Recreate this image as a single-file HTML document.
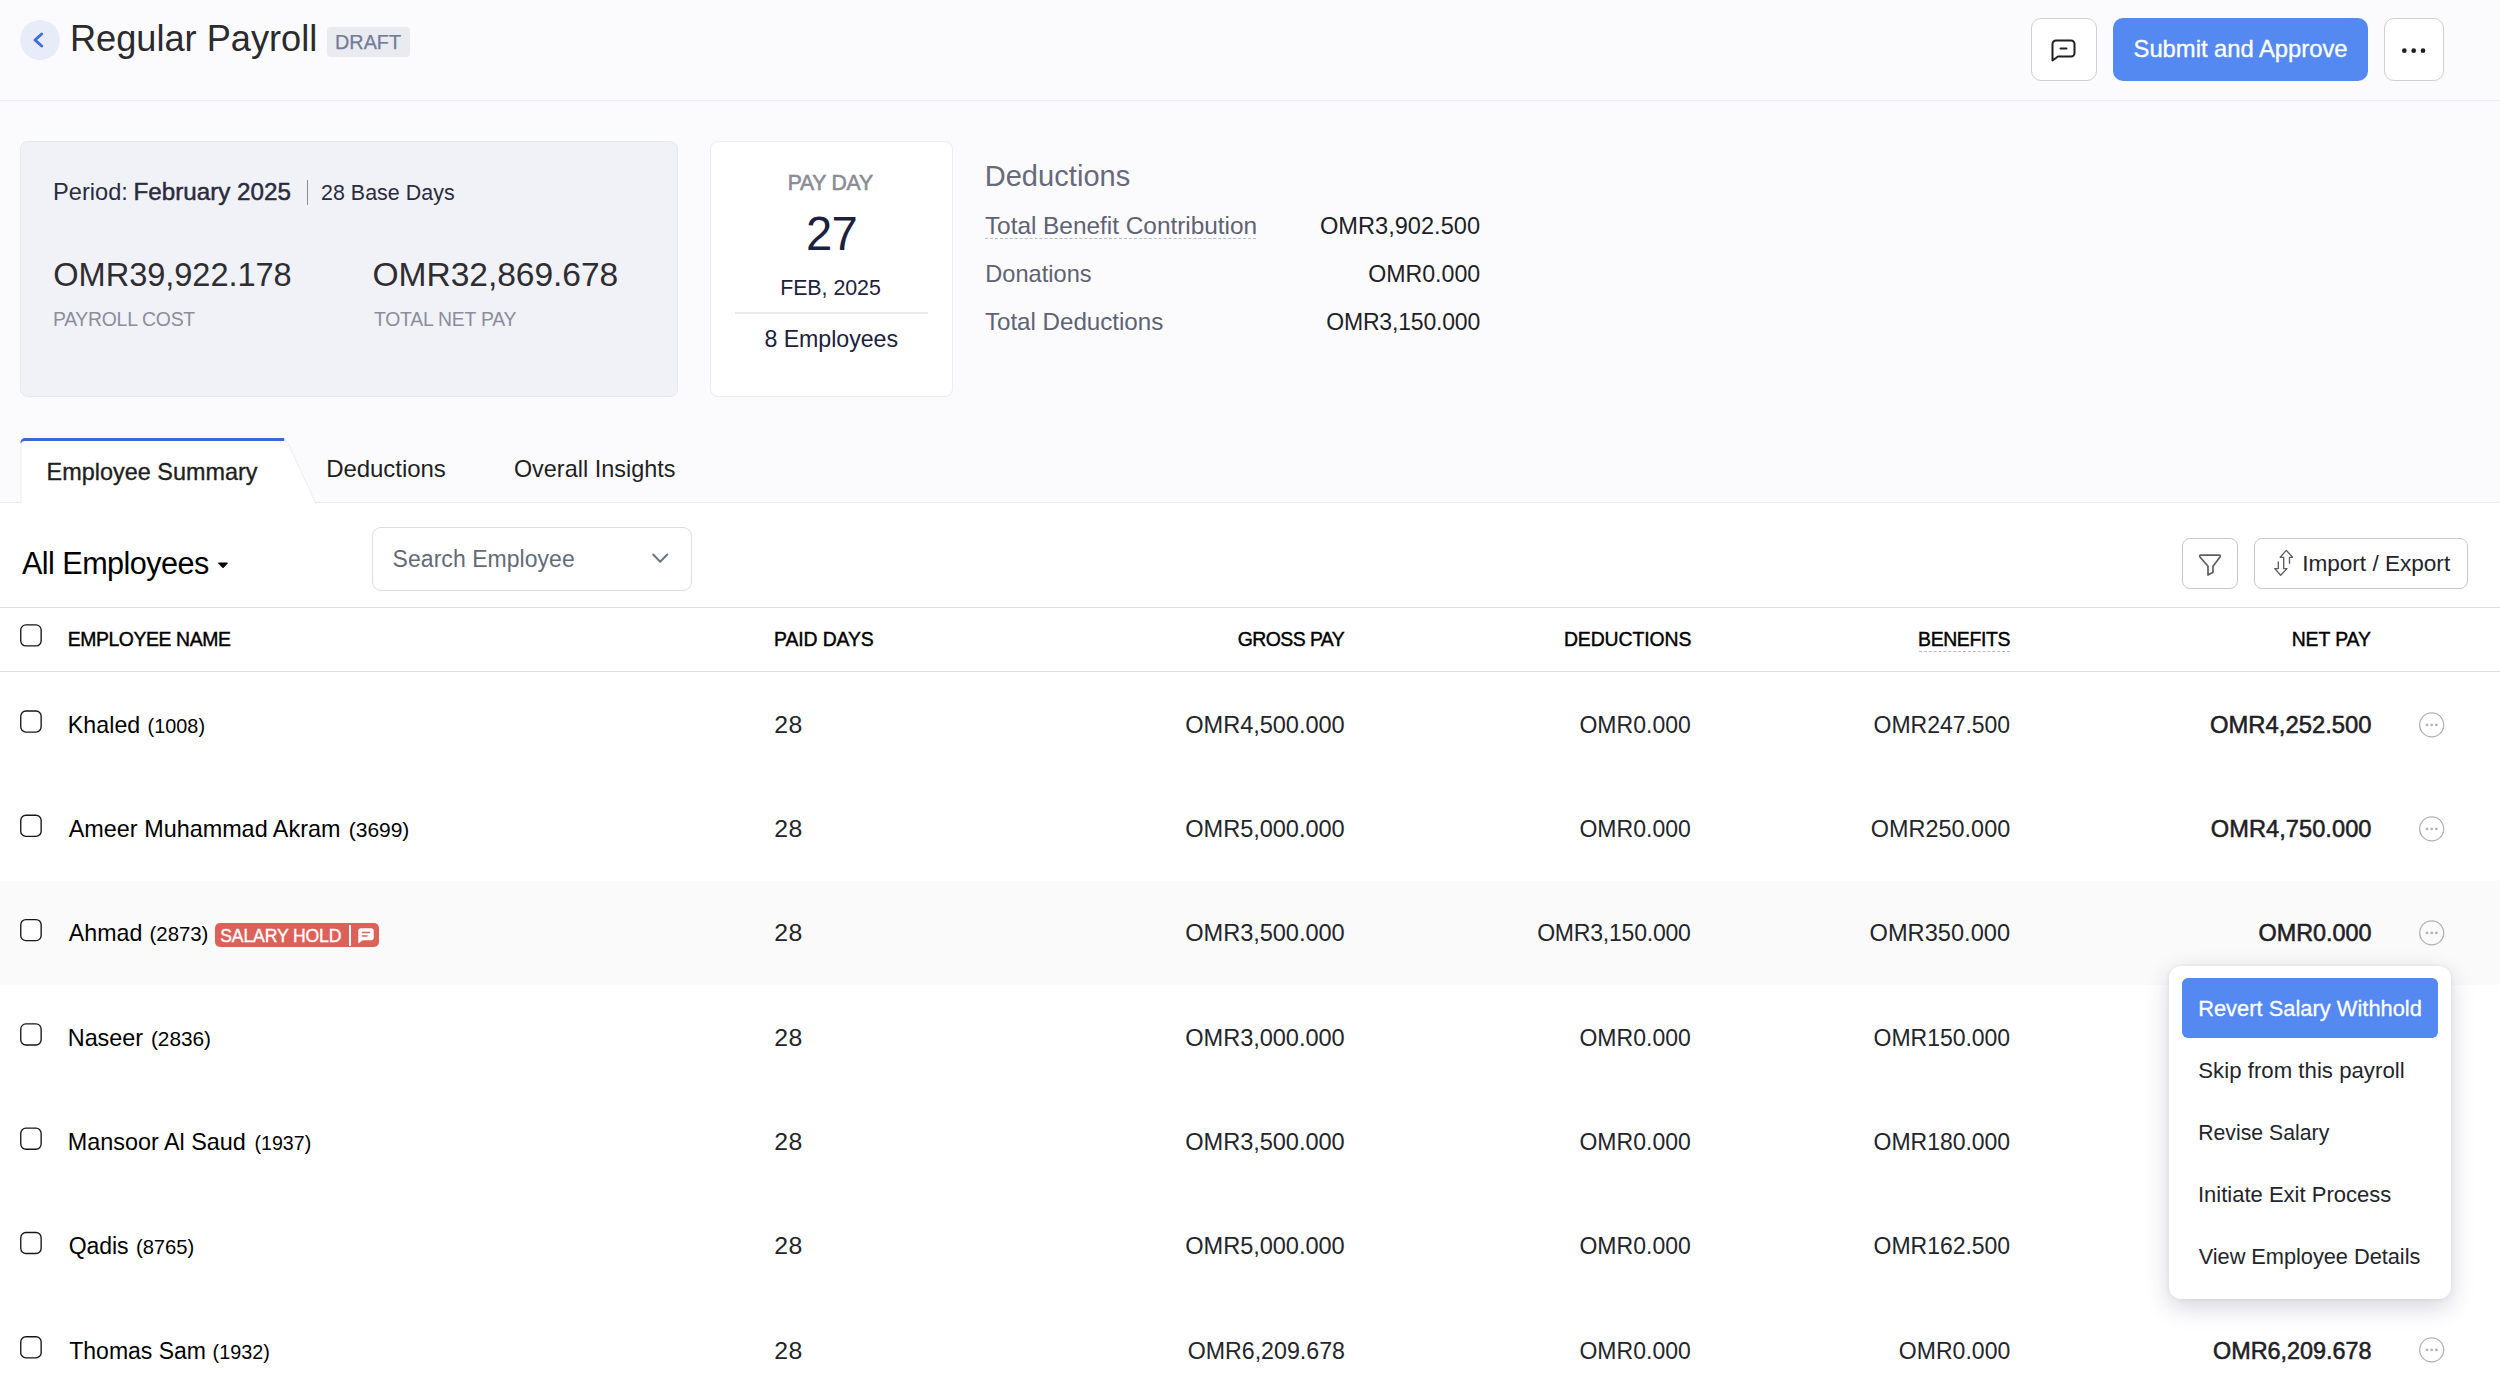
<!DOCTYPE html>
<html lang="en"><head><meta charset="utf-8"><title>Regular Payroll</title>
<style>
html,body{margin:0;padding:0;}
body{width:2500px;height:1396px;position:relative;overflow:hidden;background:#fbfbfe;font-family:"Liberation Sans", sans-serif;}
.t{position:absolute;white-space:nowrap;margin:0;padding:0;}
.a{position:absolute;box-sizing:border-box;}
svg{position:absolute;overflow:visible;}
</style></head><body>
<!-- header -->
<div class="a" style="left:0;top:100px;width:2500px;height:1px;background:#ebebef"></div>
<div class="a" style="left:20px;top:20px;width:40px;height:40px;border-radius:50%;background:#e8ecf9"></div>
<svg style="left:20px;top:20px" width="40" height="40" viewBox="0 0 40 40"><path d="M21.7 14 L15 20 L21.7 26" fill="none" stroke="#3d6fd9" stroke-width="3" stroke-linecap="round" stroke-linejoin="round"/></svg>
<div class="a" style="left:327px;top:27px;width:83px;height:30px;border-radius:4px;background:#e9ebf1"></div>
<div class="a" style="left:2031px;top:18px;width:66px;height:63px;border:1px solid #cfcfd4;border-radius:10px;background:#fff"></div>
<svg style="left:2051px;top:39px" width="26" height="24" viewBox="0 0 26 24"><path d="M5 1.5 H20 A3.5 3.5 0 0 1 23.5 5 V14 A3.5 3.5 0 0 1 20 17.5 H7 L1.5 21.5 V5 A3.5 3.5 0 0 1 5 1.5 Z" fill="none" stroke="#1f2024" stroke-width="2" stroke-linejoin="round"/><path d="M9.5 9.5 H15.5" stroke="#1f2024" stroke-width="2" stroke-linecap="round"/></svg>
<div class="a" style="left:2113px;top:18px;width:255px;height:63px;border-radius:10px;background:#5389f0"></div>
<div class="a" style="left:2384px;top:18px;width:60px;height:63px;border:1px solid #cfcfd4;border-radius:10px;background:#fff"></div>
<svg style="left:2384px;top:18px" width="60" height="63" viewBox="0 0 60 63"><circle cx="20.3" cy="32.7" r="2.35" fill="#1f2024"/><circle cx="29.7" cy="32.7" r="2.35" fill="#1f2024"/><circle cx="39" cy="32.7" r="2.35" fill="#1f2024"/></svg>
<!-- summary card -->
<div class="a" style="left:20px;top:141px;width:658px;height:256px;border-radius:8px;background:#f1f2f8;border:1px solid #e7e8ef"></div>
<div class="a" style="left:307px;top:180px;width:1px;height:25px;background:#8a8d9c"></div>
<!-- pay day card -->
<div class="a" style="left:710px;top:141px;width:243px;height:256px;border-radius:8px;background:#fff;border:1px solid #ececf2"></div>
<div class="a" style="left:735px;top:312px;width:193px;height:2px;background:#ebebef"></div>
<!-- deductions underline -->
<div class="a" style="left:985px;top:238px;width:271px;height:0;border-top:1px dashed #b9bac4"></div>
<!-- tabs -->
<div class="a" style="left:0;top:503px;width:2500px;height:893px;background:#fff"></div>
<div class="a" style="left:0;top:502px;width:2500px;height:1px;background:#e9e9ee"></div>
<svg style="left:0;top:430px" width="340" height="80" viewBox="0 0 340 80"><path d="M21 73.5 V12.5 A4 4 0 0 1 25 8.5 H281 Q287 8.5 289.5 14 L316.5 74.5 H21 Z" fill="#fff" stroke="none"/><path d="M21 72.5 V12.5 A4 4 0 0 1 25 9.5 H281 Q286.5 9.5 289 15 L316.3 74.5" fill="none" stroke="#ececf1" stroke-width="1"/><path d="M20.5 13 A4.5 4.5 0 0 1 25 8 H284.2 V11 H24.5 Q22 11 21 13 Z" fill="#3769d8"/></svg>
<!-- toolbar -->
<svg style="left:217px;top:562px" width="12" height="7" viewBox="0 0 12 7"><path d="M1.5 1 H10.5 L6 5.8 Z" fill="#000" stroke="#000" stroke-width="1" stroke-linejoin="round"/></svg>
<div class="a" style="left:372px;top:527px;width:320px;height:64px;border:1px solid #dddee3;border-radius:9px;background:#fff"></div>
<svg style="left:652px;top:553px" width="17" height="11" viewBox="0 0 17 11"><path d="M1.2 1.5 L8.2 8.8 L15.2 1.5" fill="none" stroke="#6b7688" stroke-width="2" stroke-linecap="round" stroke-linejoin="round"/></svg>
<div class="a" style="left:2182px;top:538px;width:56px;height:51px;border:1px solid #c8c8cb;border-radius:8px;background:#fff"></div>
<svg style="left:2199px;top:554px" width="23" height="23" viewBox="0 0 23 23"><path d="M1.9 1.2 H20 Q22 1.4 21 3 L14 12.3 V18.2 L9 21 V12.3 L1 3 Q0 1.4 1.9 1.2 Z" fill="none" stroke="#5e5e62" stroke-width="1.7" stroke-linejoin="round"/></svg>
<div class="a" style="left:2254px;top:538px;width:214px;height:51px;border:1px solid #c8c8cb;border-radius:8px;background:#fff"></div>
<svg style="left:2274px;top:550px" width="20" height="26" viewBox="0 0 20 26"><path d="M15.5 13.3 L15.5 7.3 L18.6 7.3 L12.3 0.4 L6.2 7.3 L9.7 7.3 L9.7 18.6 L13 18.6 L6.6 25.3 L0.8 18.6 L4.3 18.6 L4.3 12" fill="none" stroke="#5e5e62" stroke-width="1.35" stroke-linejoin="round" stroke-linecap="round"/></svg>
<!-- table -->
<div class="a" style="left:0;top:607px;width:2500px;height:1px;background:#dddde0"></div>
<div class="a" style="left:0;top:671px;width:2500px;height:1px;background:#dddde0"></div>
<div class="a" style="left:0;top:880.5px;width:2500px;height:104px;background:#fafafa"></div>
<div class="a" style="left:985px;top:238px;width:0;height:0"></div>
<div class="a" style="left:1919px;top:651px;width:91px;height:0;border-top:1px dashed #b9bac4"></div>
<svg style="left:2418px;top:710.5px" width="28" height="28" viewBox="0 0 28 28"><circle cx="13.7" cy="13.9" r="12" fill="none" stroke="#b2b2b5" stroke-width="1.3"/><circle cx="9" cy="13.9" r="1.45" fill="#b4b4b7"/><circle cx="13.7" cy="13.9" r="1.45" fill="#b4b4b7"/><circle cx="18.4" cy="13.9" r="1.45" fill="#b4b4b7"/></svg>
<svg style="left:2418px;top:814.8px" width="28" height="28" viewBox="0 0 28 28"><circle cx="13.7" cy="13.9" r="12" fill="none" stroke="#b2b2b5" stroke-width="1.3"/><circle cx="9" cy="13.9" r="1.45" fill="#b4b4b7"/><circle cx="13.7" cy="13.9" r="1.45" fill="#b4b4b7"/><circle cx="18.4" cy="13.9" r="1.45" fill="#b4b4b7"/></svg>
<svg style="left:2418px;top:919.1px" width="28" height="28" viewBox="0 0 28 28"><circle cx="13.7" cy="13.9" r="12" fill="none" stroke="#b2b2b5" stroke-width="1.3"/><circle cx="9" cy="13.9" r="1.45" fill="#b4b4b7"/><circle cx="13.7" cy="13.9" r="1.45" fill="#b4b4b7"/><circle cx="18.4" cy="13.9" r="1.45" fill="#b4b4b7"/></svg>
<svg style="left:2418px;top:1336.3px" width="28" height="28" viewBox="0 0 28 28"><circle cx="13.7" cy="13.9" r="12" fill="none" stroke="#b2b2b5" stroke-width="1.3"/><circle cx="9" cy="13.9" r="1.45" fill="#b4b4b7"/><circle cx="13.7" cy="13.9" r="1.45" fill="#b4b4b7"/><circle cx="18.4" cy="13.9" r="1.45" fill="#b4b4b7"/></svg>
<div class="a" style="left:215px;top:923px;width:164px;height:24px;border-radius:5px;background:#dc6259"></div>
<div class="a" style="left:349px;top:925px;width:2px;height:21px;background:#fff"></div>
<svg style="left:358px;top:928px" width="16" height="16" viewBox="0 0 16 16"><path d="M3 0.3 H13 A2.7 2.7 0 0 1 15.7 3 V9.6 A2.7 2.7 0 0 1 13 12.3 H4.6 L0.3 15.6 V3 A2.7 2.7 0 0 1 3 0.3 Z" fill="#fff"/><path d="M4.3 4.6 H11.6 M4.3 8 H9" stroke="#dc6259" stroke-width="1.5" stroke-linecap="round"/></svg>
<div class="a" style="left:2169.3px;top:966px;width:282px;height:333px;border-radius:12px;background:#fff;box-shadow:0 8px 24px rgba(40,40,80,0.20),0 0 4px rgba(40,40,80,0.08)"></div>
<div class="a" style="left:2182.2px;top:978.4px;width:256px;height:59.2px;border-radius:6px;background:#5389f0"></div>
<svg style="left:0;top:0" width="60" height="1396" viewBox="0 0 60 1396"><rect x="20.75" y="624.85" width="20.4" height="21.1" rx="5.2" fill="#fff" stroke="#161616" stroke-width="1.35"/><rect x="20.75" y="710.95" width="20.4" height="21.1" rx="5.2" fill="#fff" stroke="#161616" stroke-width="1.35"/><rect x="20.75" y="815.25" width="20.4" height="21.1" rx="5.2" fill="#fff" stroke="#161616" stroke-width="1.35"/><rect x="20.75" y="919.55" width="20.4" height="21.1" rx="5.2" fill="#fff" stroke="#161616" stroke-width="1.35"/><rect x="20.75" y="1023.85" width="20.4" height="21.1" rx="5.2" fill="#fff" stroke="#161616" stroke-width="1.35"/><rect x="20.75" y="1128.15" width="20.4" height="21.1" rx="5.2" fill="#fff" stroke="#161616" stroke-width="1.35"/><rect x="20.75" y="1232.45" width="20.4" height="21.1" rx="5.2" fill="#fff" stroke="#161616" stroke-width="1.35"/><rect x="20.75" y="1336.75" width="20.4" height="21.1" rx="5.2" fill="#fff" stroke="#161616" stroke-width="1.35"/></svg>

<div class="t" style="left:70.00px;top:16px;font-size:36.2px;line-height:45px;color:#2b2b2d;letter-spacing:-0.014px;">Regular Payroll</div>
<div class="t" style="left:335.05px;top:29px;font-size:19.8px;line-height:26px;color:#707c98;letter-spacing:0.012px;-webkit-text-stroke:0.25px #707c98;">DRAFT</div>
<div class="t" style="left:2133.55px;top:33px;font-size:23.8px;line-height:31px;color:#ffffff;letter-spacing:-0.021px;-webkit-text-stroke:0.35px #ffffff;">Submit and Approve</div>
<div class="t" style="left:53.00px;top:177px;font-size:23.6px;line-height:30px;color:#2a2c3e;letter-spacing:0.017px;">Period:</div>
<div class="t" style="left:133.40px;top:176px;font-size:24.2px;line-height:31px;color:#2a2c3e;letter-spacing:0.021px;-webkit-text-stroke:0.5px #2a2c3e;">February 2025</div>
<div class="t" style="left:321.00px;top:179px;font-size:21.4px;line-height:28px;color:#2a2c3e;letter-spacing:0.045px;">28 Base Days</div>
<div class="t" style="left:53.30px;top:254px;font-size:32.6px;line-height:41px;color:#2e2e32;letter-spacing:-0.054px;">OMR39,922.178</div>
<div class="t" style="left:372.50px;top:254px;font-size:33.6px;line-height:41px;color:#2e2e32;letter-spacing:-0.058px;">OMR32,869.678</div>
<div class="t" style="left:52.90px;top:306px;font-size:19.4px;line-height:26px;color:#8a8d9c;letter-spacing:-0.255px;">PAYROLL COST</div>
<div class="t" style="left:373.90px;top:306px;font-size:19.4px;line-height:26px;color:#8a8d9c;letter-spacing:-0.204px;">TOTAL NET PAY</div>
<div class="t" style="left:787.65px;top:169px;font-size:21.2px;line-height:27px;color:#8a8d96;letter-spacing:-0.217px;-webkit-text-stroke:0.6px #8a8d96;">PAY DAY</div>
<div class="t" style="left:805.90px;top:205px;font-size:47.2px;line-height:57px;color:#1c2140;letter-spacing:-0.600px;">27</div>
<div class="t" style="left:780.15px;top:274px;font-size:21.4px;line-height:28px;color:#1c2140;letter-spacing:-0.050px;">FEB, 2025</div>
<div class="t" style="left:764.40px;top:324px;font-size:23.2px;line-height:30px;color:#1c2140;letter-spacing:-0.045px;">8 Employees</div>
<div class="t" style="left:984.70px;top:158px;font-size:29.0px;line-height:36px;color:#666a79;letter-spacing:0.056px;">Deductions</div>
<div class="t" style="left:984.90px;top:210px;font-size:24.4px;line-height:31px;color:#5e6272;letter-spacing:-0.012px;">Total Benefit Contribution</div>
<div class="t" style="left:985.20px;top:259px;font-size:23.6px;line-height:30px;color:#5e6272;letter-spacing:0.019px;">Donations</div>
<div class="t" style="left:984.90px;top:306px;font-size:24.2px;line-height:31px;color:#5e6272;letter-spacing:-0.027px;">Total Deductions</div>
<div class="t" style="left:1319.95px;top:211px;font-size:23.6px;line-height:30px;color:#1e1f26;letter-spacing:0.009px;">OMR3,902.500</div>
<div class="t" style="left:1368.20px;top:259px;font-size:23.2px;line-height:30px;color:#1e1f26;letter-spacing:-0.021px;">OMR0.000</div>
<div class="t" style="left:1326.20px;top:307px;font-size:23.0px;line-height:30px;color:#1e1f26;letter-spacing:-0.173px;">OMR3,150.000</div>
<div class="t" style="left:46.60px;top:457px;font-size:23.4px;line-height:30px;color:#1f1f1f;letter-spacing:0.020px;-webkit-text-stroke:0.35px #1f1f1f;">Employee Summary</div>
<div class="t" style="left:326.20px;top:453px;font-size:24.0px;line-height:31px;color:#1f1f1f;letter-spacing:-0.050px;">Deductions</div>
<div class="t" style="left:513.90px;top:454px;font-size:23.4px;line-height:30px;color:#1f1f1f;letter-spacing:0.027px;">Overall Insights</div>
<div class="t" style="left:21.95px;top:544px;font-size:30.6px;line-height:38px;color:#000;letter-spacing:-0.542px;">All Employees</div>
<div class="t" style="left:392.60px;top:544px;font-size:23.0px;line-height:30px;color:#646b77;letter-spacing:0.043px;">Search Employee</div>
<div class="t" style="left:2302.20px;top:549px;font-size:22.6px;line-height:29px;color:#23252b;letter-spacing:-0.014px;">Import / Export</div>
<div class="t" style="left:67.70px;top:626px;font-size:19.4px;line-height:26px;color:#000;letter-spacing:-0.413px;-webkit-text-stroke:0.42px #000;">EMPLOYEE NAME</div>
<div class="t" style="left:774.00px;top:626px;font-size:19.4px;line-height:26px;color:#000;letter-spacing:-0.106px;-webkit-text-stroke:0.42px #000;">PAID DAYS</div>
<div class="t" style="left:1237.80px;top:626px;font-size:19.4px;line-height:26px;color:#000;letter-spacing:-0.556px;-webkit-text-stroke:0.42px #000;">GROSS PAY</div>
<div class="t" style="left:1563.90px;top:626px;font-size:19.4px;line-height:26px;color:#000;letter-spacing:-0.083px;-webkit-text-stroke:0.42px #000;">DEDUCTIONS</div>
<div class="t" style="left:1918.10px;top:626px;font-size:19.4px;line-height:26px;color:#000;letter-spacing:-0.371px;-webkit-text-stroke:0.42px #000;">BENEFITS</div>
<div class="t" style="left:2291.70px;top:626px;font-size:19.4px;line-height:26px;color:#000;letter-spacing:-0.083px;-webkit-text-stroke:0.42px #000;">NET PAY</div>
<div class="t" style="left:67.80px;top:710px;font-size:23.2px;line-height:30px;color:#000;letter-spacing:0.050px;">Khaled</div>
<div class="t" style="left:147.55px;top:713px;font-size:19.8px;line-height:26px;color:#000;letter-spacing:0.050px;">(1008)</div>
<div class="t" style="left:774.25px;top:709px;font-size:24.8px;line-height:31px;color:#23252b;letter-spacing:0.350px;">28</div>
<div class="t" style="left:1185.25px;top:710px;font-size:23.6px;line-height:30px;color:#23252b;letter-spacing:-0.055px;">OMR4,500.000</div>
<div class="t" style="left:1579.40px;top:710px;font-size:23.0px;line-height:30px;color:#23252b;letter-spacing:0.036px;">OMR0.000</div>
<div class="t" style="left:1873.60px;top:710px;font-size:23.0px;line-height:30px;color:#23252b;letter-spacing:-0.033px;">OMR247.500</div>
<div class="t" style="left:2209.95px;top:709px;font-size:23.8px;line-height:31px;color:#1f2026;letter-spacing:0.023px;-webkit-text-stroke:0.55px #1f2026;">OMR4,252.500</div>
<div class="t" style="left:68.75px;top:814px;font-size:23.4px;line-height:30px;color:#000;">Ameer Muhammad Akram</div>
<div class="t" style="left:348.75px;top:816px;font-size:21.0px;line-height:27px;color:#000;letter-spacing:-0.020px;">(3699)</div>
<div class="t" style="left:774.25px;top:813px;font-size:24.8px;line-height:31px;color:#23252b;letter-spacing:0.350px;">28</div>
<div class="t" style="left:1185.25px;top:814px;font-size:23.6px;line-height:30px;color:#23252b;letter-spacing:-0.055px;">OMR5,000.000</div>
<div class="t" style="left:1579.40px;top:814px;font-size:23.0px;line-height:30px;color:#23252b;letter-spacing:0.036px;">OMR0.000</div>
<div class="t" style="left:1870.80px;top:814px;font-size:23.4px;line-height:30px;color:#23252b;letter-spacing:0.028px;">OMR250.000</div>
<div class="t" style="left:2210.85px;top:814px;font-size:23.6px;line-height:30px;color:#1f2026;letter-spacing:0.055px;-webkit-text-stroke:0.55px #1f2026;">OMR4,750.000</div>
<div class="t" style="left:68.75px;top:918px;font-size:23.2px;line-height:30px;color:#000;letter-spacing:0.062px;">Ahmad</div>
<div class="t" style="left:149.55px;top:921px;font-size:20.4px;line-height:26px;color:#000;letter-spacing:-0.020px;">(2873)</div>
<div class="t" style="left:774.25px;top:917px;font-size:24.8px;line-height:31px;color:#23252b;letter-spacing:0.350px;">28</div>
<div class="t" style="left:1185.25px;top:918px;font-size:23.6px;line-height:30px;color:#23252b;letter-spacing:-0.055px;">OMR3,500.000</div>
<div class="t" style="left:1537.20px;top:918px;font-size:23.0px;line-height:30px;color:#23252b;letter-spacing:-0.209px;">OMR3,150.000</div>
<div class="t" style="left:1869.55px;top:918px;font-size:23.6px;line-height:30px;color:#23252b;letter-spacing:0.028px;">OMR350.000</div>
<div class="t" style="left:2258.50px;top:918px;font-size:23.4px;line-height:30px;color:#1f2026;letter-spacing:-0.007px;-webkit-text-stroke:0.55px #1f2026;">OMR0.000</div>
<div class="t" style="left:67.80px;top:1023px;font-size:23.4px;line-height:30px;color:#000;letter-spacing:-0.040px;">Naseer</div>
<div class="t" style="left:150.95px;top:1025px;font-size:20.8px;line-height:27px;color:#000;letter-spacing:-0.020px;">(2836)</div>
<div class="t" style="left:774.25px;top:1022px;font-size:24.8px;line-height:31px;color:#23252b;letter-spacing:0.350px;">28</div>
<div class="t" style="left:1185.25px;top:1023px;font-size:23.6px;line-height:30px;color:#23252b;letter-spacing:-0.055px;">OMR3,000.000</div>
<div class="t" style="left:1579.40px;top:1023px;font-size:23.0px;line-height:30px;color:#23252b;letter-spacing:0.036px;">OMR0.000</div>
<div class="t" style="left:1873.60px;top:1023px;font-size:23.0px;line-height:30px;color:#23252b;letter-spacing:-0.033px;">OMR150.000</div>
<div class="t" style="left:67.80px;top:1127px;font-size:23.4px;line-height:30px;color:#000;letter-spacing:-0.007px;">Mansoor Al Saud</div>
<div class="t" style="left:254.45px;top:1130px;font-size:19.6px;line-height:26px;color:#000;letter-spacing:0.030px;">(1937)</div>
<div class="t" style="left:774.25px;top:1126px;font-size:24.8px;line-height:31px;color:#23252b;letter-spacing:0.350px;">28</div>
<div class="t" style="left:1185.25px;top:1127px;font-size:23.6px;line-height:30px;color:#23252b;letter-spacing:-0.055px;">OMR3,500.000</div>
<div class="t" style="left:1579.40px;top:1127px;font-size:23.0px;line-height:30px;color:#23252b;letter-spacing:0.036px;">OMR0.000</div>
<div class="t" style="left:1873.60px;top:1127px;font-size:23.0px;line-height:30px;color:#23252b;letter-spacing:-0.033px;">OMR180.000</div>
<div class="t" style="left:68.80px;top:1231px;font-size:23.0px;line-height:30px;color:#000;letter-spacing:-0.112px;">Qadis</div>
<div class="t" style="left:135.95px;top:1234px;font-size:20.2px;line-height:26px;color:#000;letter-spacing:-0.020px;">(8765)</div>
<div class="t" style="left:774.25px;top:1230px;font-size:24.8px;line-height:31px;color:#23252b;letter-spacing:0.350px;">28</div>
<div class="t" style="left:1185.25px;top:1231px;font-size:23.6px;line-height:30px;color:#23252b;letter-spacing:-0.055px;">OMR5,000.000</div>
<div class="t" style="left:1579.40px;top:1231px;font-size:23.0px;line-height:30px;color:#23252b;letter-spacing:0.036px;">OMR0.000</div>
<div class="t" style="left:1873.60px;top:1231px;font-size:23.0px;line-height:30px;color:#23252b;letter-spacing:-0.033px;">OMR162.500</div>
<div class="t" style="left:69.30px;top:1336px;font-size:23.0px;line-height:30px;color:#000;letter-spacing:-0.017px;">Thomas Sam</div>
<div class="t" style="left:212.55px;top:1339px;font-size:19.8px;line-height:26px;color:#000;letter-spacing:0.010px;">(1932)</div>
<div class="t" style="left:774.25px;top:1335px;font-size:24.8px;line-height:31px;color:#23252b;letter-spacing:0.350px;">28</div>
<div class="t" style="left:1187.70px;top:1336px;font-size:23.2px;line-height:30px;color:#23252b;">OMR6,209.678</div>
<div class="t" style="left:1579.40px;top:1336px;font-size:23.0px;line-height:30px;color:#23252b;letter-spacing:0.036px;">OMR0.000</div>
<div class="t" style="left:1898.80px;top:1336px;font-size:23.0px;line-height:30px;color:#23252b;letter-spacing:0.036px;">OMR0.000</div>
<div class="t" style="left:2213.10px;top:1336px;font-size:23.4px;line-height:30px;color:#1f2026;letter-spacing:-0.014px;-webkit-text-stroke:0.55px #1f2026;">OMR6,209.678</div>
<div class="t" style="left:220.25px;top:924px;font-size:17.6px;line-height:24px;color:#fff;letter-spacing:-0.145px;-webkit-text-stroke:0.35px #fff;">SALARY HOLD</div>
<div class="t" style="left:2198.15px;top:994px;font-size:21.8px;line-height:29px;color:#fff;letter-spacing:0.040px;-webkit-text-stroke:0.3px #fff;">Revert Salary Withhold</div>
<div class="t" style="left:2198.30px;top:1056px;font-size:22.2px;line-height:29px;color:#23252b;letter-spacing:0.019px;">Skip from this payroll</div>
<div class="t" style="left:2198.15px;top:1119px;font-size:21.2px;line-height:27px;color:#23252b;letter-spacing:0.033px;">Revise Salary</div>
<div class="t" style="left:2197.90px;top:1180px;font-size:22.0px;line-height:29px;color:#23252b;letter-spacing:0.010px;">Initiate Exit Process</div>
<div class="t" style="left:2198.65px;top:1242px;font-size:21.8px;line-height:29px;color:#23252b;letter-spacing:-0.040px;">View Employee Details</div>
</body></html>
